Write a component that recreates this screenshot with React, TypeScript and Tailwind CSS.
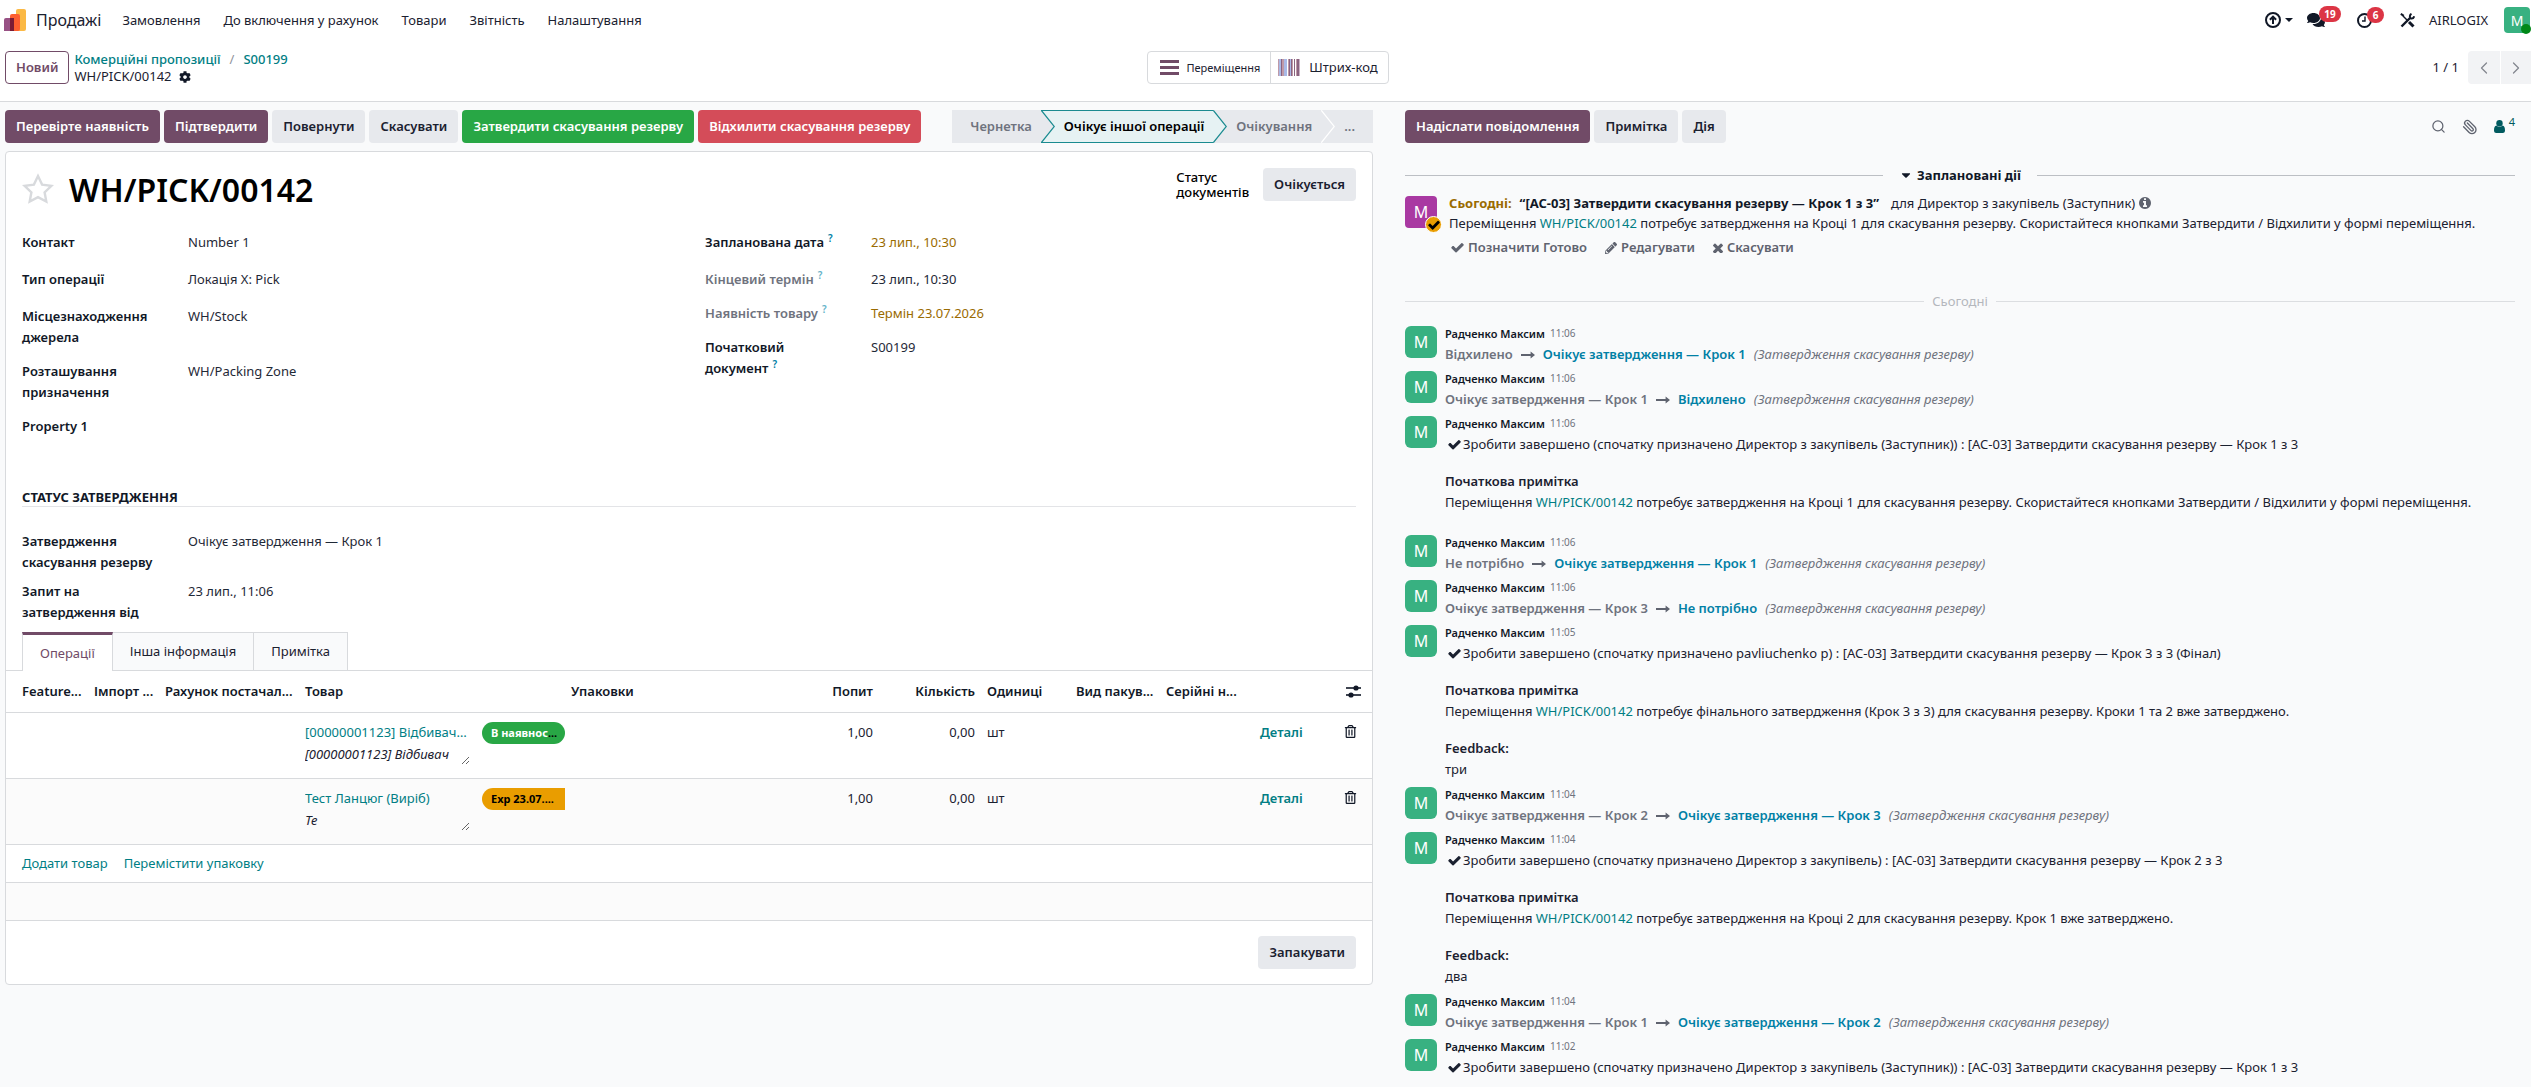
import type { ReactNode } from "react";
import clsx from "clsx";
import { FaCaretDown, FaCog, FaComments, FaPencilAlt, FaRegTrashAlt } from "react-icons/fa";
import { Search, Paperclip, ChevronLeft, ChevronRight } from "lucide-react";

const menuItems = ["Замовлення", "До включення у рахунок", "Товари", "Звітність", "Налаштування"];

type Field = { label: string; value?: string; help?: boolean; muted?: boolean; warning?: boolean; tall?: boolean };

const leftFields: Field[] = [
  { label: "Контакт", value: "Number 1", tall: true },
  { label: "Тип операції", value: "Локація X: Pick", tall: true },
  { label: "Місцезнаходження джерела", value: "WH/Stock" },
  { label: "Розташування призначення", value: "WH/Packing Zone" },
  { label: "Property 1" },
];

const rightFields: Field[] = [
  { label: "Запланована дата", value: "23 лип., 10:30", help: true, warning: true, tall: true },
  { label: "Кінцевий термін", value: "23 лип., 10:30", help: true, muted: true },
  { label: "Наявність товару", value: "Термін 23.07.2026", help: true, muted: true, warning: true },
  { label: "Початковий документ", value: "S00199", help: true },
];

const lines = [
  { product: "[00000001123] Відбивач ...", description: "[00000001123] Відбивач", badge: "В наявнос", ok: true },
  { product: "Тест Ланцюг (Виріб)", description: "Те", badge: "Exp 23.07.", ok: false },
];

type Message = {
  time: string;
  from?: string;
  to?: string;
  done?: string;
  note?: [string, string];
  feedback?: string;
};

const messages: Message[] = [
  { time: "11:06", from: "Відхилено", to: "Очікує затвердження — Крок 1" },
  { time: "11:06", from: "Очікує затвердження — Крок 1", to: "Відхилено" },
  {
    time: "11:06",
    done: "Зробити завершено (спочатку призначено Директор з закупівель (Заступник)) : [AC-03] Затвердити скасування резерву — Крок 1 з 3",
    note: [
      "Переміщення",
      "потребує затвердження на Кроці 1 для скасування резерву. Скористайтеся кнопками Затвердити / Відхилити у формі переміщення.",
    ],
  },
  { time: "11:06", from: "Не потрібно", to: "Очікує затвердження — Крок 1" },
  { time: "11:06", from: "Очікує затвердження — Крок 3", to: "Не потрібно" },
  {
    time: "11:05",
    done: "Зробити завершено (спочатку призначено pavliuchenko p) : [AC-03] Затвердити скасування резерву — Крок 3 з 3 (Фінал)",
    note: ["Переміщення", "потребує фінального затвердження (Крок 3 з 3) для скасування резерву. Кроки 1 та 2 вже затверджено."],
    feedback: "три",
  },
  { time: "11:04", from: "Очікує затвердження — Крок 2", to: "Очікує затвердження — Крок 3" },
  {
    time: "11:04",
    done: "Зробити завершено (спочатку призначено Директор з закупівель) : [AC-03] Затвердити скасування резерву — Крок 2 з 3",
    note: ["Переміщення", "потребує затвердження на Кроці 2 для скасування резерву. Крок 1 вже затверджено."],
    feedback: "два",
  },
  { time: "11:04", from: "Очікує затвердження — Крок 1", to: "Очікує затвердження — Крок 2" },
  {
    time: "11:02",
    done: "Зробити завершено (спочатку призначено Директор з закупівель (Заступник)) : [AC-03] Затвердити скасування резерву — Крок 1 з 3",
  },
];

function Button({ variant = "secondary", children }: { variant?: "primary" | "secondary" | "success" | "danger"; children: ReactNode }) {
  return (
    <button
      type="button"
      className={clsx(
        "h-[33px] shrink-0 whitespace-nowrap rounded px-[11px] font-semibold",
        variant === "primary" && "bg-[#714b67] text-white",
        variant === "secondary" && "bg-[#e7e9ed] text-[#1b2130]",
        variant === "success" && "bg-[#28a745] text-white",
        variant === "danger" && "bg-[#d44c59] text-white",
      )}
    >
      {children}
    </button>
  );
}

function SalesLogo() {
  return (
    <svg width="22" height="22" viewBox="0 0 22 22" aria-hidden="true">
      <rect x="12" y="0" width="10" height="22" rx="2" fill="#fbb945" />
      <path d="M0 11a2 2 0 0 1 2-2h8v13H0z" fill="#985184" />
      <path d="M6 7a2 2 0 0 1 2-2h6a2 2 0 0 1 2 2v13a2 2 0 0 1-2 2H6z" fill="#fc5e2f" />
      <path d="M6 9h4v13H6z" fill="#7a1b35" />
    </svg>
  );
}

function ToolsIcon() {
  return (
    <svg width="15" height="15" viewBox="0 0 15 15" fill="none" stroke="#111827" aria-hidden="true">
      <path d="M.8.8l3 2" strokeWidth="2" />
      <path d="M3 3l5 5" strokeWidth="1.4" />
      <path d="M9 9l4.500 4.500" strokeWidth="3" />
      <path d="M10 5L1.500 13.500" strokeWidth="2.400" />
      <path d="M14.200 3.200a3 3 0 0 1-3.600 2.200 3 3 0 0 1 .9-4.600" strokeWidth="2" />
    </svg>
  );
}

function Bars() {
  return (
    <svg width="19" height="15" viewBox="0 0 19 15" fill="#714b67" aria-hidden="true">
      <rect width="19" height="3" y="0" />
      <rect width="19" height="3" y="6" />
      <rect width="19" height="3" y="12" />
    </svg>
  );
}

function Barcode() {
  return (
    <svg width="22" height="17" viewBox="0 0 22 17" aria-hidden="true">
      <path d="M0 0h1v17H0zM4 0h2v17H4zM10 0h1v17h-1zM14 0h1v17h-1zM18 0h1v17h-1z" fill="#c09aa8" />
      <path d="M1 0h2v17H1zM6 0h2v17H6zM8 0h1v17H8zM12 0h1v17h-1z" fill="#a9b9e6" />
      <path d="M3 0h1v17H3zM11 0h1v17h-1zM13 0h1v17h-1zM16 0h1v17h-1zM19 0h2v17h-2z" fill="#8a6480" />
      <path d="M21 0h1v17h-1z" fill="#c9b2c4" />
    </svg>
  );
}

function LongArrow() {
  return (
    <svg width="14" height="8" viewBox="0 0 14 8" fill="#5f636f" className="inline-block shrink-0" aria-hidden="true">
      <path d="M0 3.1h9.600V.6L14 4 9.600 7.400V4.900H0z" />
    </svg>
  );
}

function CheckIcon({ size = 13 }: { size?: number }) {
  return (
    <svg width={size} height={size} viewBox="90 90 1612 1612" fill="currentColor" className="shrink-0" aria-hidden="true">
      <path d="M1671 566q0 40-28 68l-724 724-136 136q-28 28-68 28t-68-28l-136-136-362-362q-28-28-28-68t28-68l136-136q28-28 68-28t68 28l294 295 656-657q28-28 68-28t68 28l136 136q28 28 28 68z" />
    </svg>
  );
}

function InfoIcon() {
  return (
    <svg width="12" height="12" viewBox="128 128 1536 1536" fill="#5f636f" aria-hidden="true">
      <path d="M1152 1376v-160q0-14-9-23t-23-9h-96v-512q0-14-9-23t-23-9h-320q-14 0-23 9t-9 23v160q0 14 9 23t23 9h96v320h-96q-14 0-23 9t-9 23v160q0 14 9 23t23 9h448q14 0 23-9t9-23zm-128-896v-160q0-14-9-23t-23-9h-192q-14 0-23 9t-9 23v160q0 14 9 23t23 9h192q14 0 23-9t9-23zm640 416q0 209-103 385.5t-279.5 279.5-385.5 103-385.5-103-279.5-279.5-103-385.5 103-385.5 279.5-279.5 385.5-103 385.5 103 279.5 279.5 103 385.5z" />
    </svg>
  );
}

function TimesIcon() {
  return (
    <svg width="10" height="10" viewBox="302 302 1188 1188" fill="currentColor" aria-hidden="true">
      <path d="M1490 1322q0 40-28 68l-136 136q-28 28-68 28t-68-28l-294-294-294 294q-28 28-68 28t-68-28l-136-136q-28-28-28-68t28-68l294-294-294-294q-28-28-28-68t28-68l136-136q28-28 68-28t68 28l294 294 294-294q28-28 68-28t68 28l136 136q28 28 28 68t-28 68l-294 294 294 294q28 28 28 68z" />
    </svg>
  );
}

function SlidersIcon() {
  return (
    <svg width="15" height="13" viewBox="0 0 15 13" fill="#111827" aria-hidden="true">
      <rect x="0" y="2.200" width="15" height="1.600" />
      <rect x="0" y="9.200" width="15" height="1.600" />
      <circle cx="10" cy="3" r="2.600" />
      <circle cx="5" cy="10" r="2.600" />
    </svg>
  );
}

function Navbar() {
  return (
    <header className="flex h-10 items-center justify-between pl-1 pr-px text-[#1b2130]">
      <div className="flex items-center">
        <SalesLogo />
        <a href="#sales" className="ml-[10px] text-[16px] leading-6">
          Продажі
        </a>
        <nav className="ml-[21px] flex gap-[23px]">
          {menuItems.map((item) => (
            <a key={item} href="#menu">
              {item}
            </a>
          ))}
        </nav>
      </div>
      <div className="flex items-center">
        <button type="button" aria-label="Оновлення" className="flex items-center gap-1">
          <svg width="16" height="16" viewBox="0 0 16 16" fill="none" stroke="#111827" strokeWidth="2" aria-hidden="true">
            <circle cx="8" cy="8" r="7" />
            <path d="M8 12V5M4.900 7.800L8 4.700l3.100 3.100" />
          </svg>
          <svg width="8" height="4" viewBox="0 0 8 4" fill="#111827" aria-hidden="true">
            <path d="M0 0h8L4 4z" />
          </svg>
        </button>
        <button type="button" aria-label="Повідомлення" className="relative ml-[14px] w-[34px]">
          <FaComments size={18} color="#111827" />
          <span className="absolute -top-[5px] left-[12px] flex h-4 w-[22px] items-center justify-center rounded-full bg-[#dc3545] text-[10px] font-bold leading-none text-white">
            19
          </span>
        </button>
        <button type="button" aria-label="Дії" className="relative ml-4 w-[27px]">
          <svg width="15" height="15" viewBox="0 0 15 15" fill="none" stroke="#111827" strokeWidth="2" aria-hidden="true">
            <circle cx="7.5" cy="7.5" r="6.5" />
            <path d="M8 3.500v4.500H5" strokeWidth="1.4" />
          </svg>
          <span className="absolute -top-[6px] left-[10px] flex h-4 w-[17px] items-center justify-center rounded-full bg-[#dc3545] text-[10px] font-bold leading-none text-white">
            6
          </span>
        </button>
        <button type="button" aria-label="Інструменти" className="ml-4">
          <ToolsIcon />
        </button>
        <span className="ml-[14px]">AIRLOGIX</span>
        <button type="button" aria-label="Профіль" className="relative ml-4 flex h-[26px] w-[26px] items-center justify-center rounded bg-[#38b181] text-[14px] text-white">
          M
          <span className="absolute -bottom-px -right-px h-[10px] w-[10px] rounded-full bg-[#008818]" />
        </button>
      </div>
    </header>
  );
}

function ControlPanel() {
  return (
    <div className="flex h-[62px] items-start justify-between border-b border-[#d8dadd] pt-[11px]">
      <div className="flex flex-1 gap-[5px] pl-[5px]">
        <button type="button" className="h-[33px] rounded border border-[#714b67] px-[10px] font-semibold text-[#714b67]">
          Новий
        </button>
        <div className="flex flex-col leading-[17px]">
          <div className="flex gap-[9px] font-medium text-[#017e84]">
            <a href="#quotations">Комерційні пропозиції</a>
            <span className="font-normal text-[#8f929b]">/</span>
            <a href="#order">S00199</a>
          </div>
          <div className="flex items-center gap-[7px]">
            WH/PICK/00142
            <FaCog size={12} color="#111827" />
          </div>
        </div>
      </div>
      <div className="flex h-[33px] divide-x divide-[#d8dadd] rounded border border-[#d8dadd]">
        <button type="button" className="flex items-center gap-[7px] pl-3 pr-[10px] text-[11px]">
          <Bars />
          Переміщення
        </button>
        <button type="button" className="flex items-center gap-[9px] pl-[7px] pr-[10px]">
          <Barcode />
          Штрих-код
        </button>
      </div>
      <div className="flex flex-1 items-center justify-end">
        <span className="mr-[9px]">1 / 1</span>
        <button type="button" aria-label="Попередній" disabled className="flex h-[33px] w-8 items-center justify-center rounded-l bg-[#f2f3f5] text-[#83868f]">
          <ChevronLeft size={20} strokeWidth={1.5} />
        </button>
        <button type="button" aria-label="Наступний" disabled className="ml-px flex h-[33px] w-[30px] items-center justify-center bg-[#f2f3f5] text-[#83868f]">
          <ChevronRight size={20} strokeWidth={1.5} />
        </button>
      </div>
    </div>
  );
}

function StatusArrow({ left, right, stroke }: { left: string; right: string; stroke: string }) {
  return (
    <svg width="14" height="33" viewBox="0 0 14 33" className="shrink-0" aria-hidden="true">
      <rect width="14" height="33" fill={right} />
      <path d="M0 0L13.300 16.500 0 33z" fill={left} />
      {right === "#e6f2f3" && <path d="M0 .5h14M0 32.500h14" stroke={stroke} />}
      <path d="M.3.3L13.300 16.500.3 32.700" fill="none" stroke={stroke} strokeWidth="1.200" />
    </svg>
  );
}

function StatusBar() {
  return (
    <div className="flex h-[33px] items-stretch font-semibold text-[#6f737e]">
      <button type="button" className="bg-[#e7e9ed] pl-[18px] pr-[9px]">
        Чернетка
      </button>
      <StatusArrow left="#e7e9ed" right="#e6f2f3" stroke="#1a8b90" />
      <button type="button" className="border-y border-[#1a8b90] bg-[#e6f2f3] px-[9px] text-black">
        Очікує іншої операції
      </button>
      <StatusArrow left="#e6f2f3" right="#e7e9ed" stroke="#1a8b90" />
      <button type="button" className="bg-[#e7e9ed] px-[9px]">
        Очікування
      </button>
      <StatusArrow left="#e7e9ed" right="#e7e9ed" stroke="#ffffff" />
      <button type="button" className="bg-[#e7e9ed] pl-[9px] pr-[18px]">
        ...
      </button>
    </div>
  );
}

function FieldRow({ field }: { field: Field }) {
  return (
    <div className={clsx("flex leading-[21px]", field.tall && "min-h-6")}>
      <span className={clsx("w-[166px] shrink-0 pr-7 font-semibold", field.muted ? "text-[#6f737e]" : "text-[#111827]")}>
        {field.label}
        {field.help && (
          <sup className={clsx("ml-1 text-[10px]", field.muted ? "text-[#66b3c9]" : "text-[#0180a5]")}>?</sup>
        )}
      </span>
      <span className={field.warning ? "text-[#9a6b01]" : "text-[#1f2937]"}>{field.value}</span>
    </div>
  );
}

function OperationsTable() {
  const head = "overflow-hidden whitespace-nowrap px-[6px] text-left font-semibold text-[#111827]";
  return (
    <table className="w-full table-fixed border-collapse">
      <colgroup>
        <col className="w-[82px]" />
        <col className="w-[71px]" />
        <col className="w-[140px]" />
        <col className="w-[177px]" />
        <col className="w-[89px]" />
        <col />
        <col className="w-[100px]" />
        <col className="w-[102px]" />
        <col className="w-[89px]" />
        <col className="w-[90px]" />
        <col className="w-[94px]" />
        <col className="w-[78px]" />
        <col className="w-[40px]" />
      </colgroup>
      <thead>
        <tr className="h-[41px] border-b border-[#d8dadd]">
          <th className={clsx(head, "pl-4")}>Feature...</th>
          <th className={head}>Імпорт ...</th>
          <th className={head}>Рахунок постачал...</th>
          <th className={head}>Товар</th>
          <th className={head} />
          <th className={head}>Упаковки</th>
          <th className={clsx(head, "text-right")}>Попит</th>
          <th className={clsx(head, "text-right")}>Кількість</th>
          <th className={head}>Одиниці</th>
          <th className={head}>Вид пакув...</th>
          <th className={head}>Серійні н...</th>
          <th className={head} />
          <th className={head}>
            <button type="button" aria-label="Стовпці" className="ml-2 block">
              <SlidersIcon />
            </button>
          </th>
        </tr>
      </thead>
      <tbody>
        {lines.map((line) => (
          <tr key={line.product} className="h-[66px] border-b border-[#d8dadd] align-top even:bg-[#fbfbfb]">
            <td colSpan={3} />
            <td className="px-[6px] pt-[9px] leading-[21px]">
              <a href="#product" className="block truncate text-[#017e84]">
                {line.product}
              </a>
              <textarea
                aria-label="Опис"
                defaultValue={line.description}
                rows={1}
                className="block h-[22px] w-full overflow-hidden bg-transparent pr-4 italic leading-[22px] text-[#1b2130] outline-none"
              />
            </td>
            <td className="pl-[6px] pt-[9px]">
              <span
                className={clsx(
                  "block h-[22px] overflow-hidden whitespace-nowrap pl-[9px] text-[11px] font-bold leading-[22px]",
                  line.ok ? "rounded-full bg-[#28a745] text-white" : "rounded-l-full bg-[#e99d00] text-black",
                )}
              >
                {line.badge}
                <span className="text-black">...</span>
              </span>
            </td>
            <td />
            <td className="px-[6px] pt-[9px] text-right leading-[21px]">1,00</td>
            <td className="px-[6px] pt-[9px] text-right leading-[21px]">0,00</td>
            <td className="px-[6px] pt-[9px] leading-[21px]">шт</td>
            <td colSpan={2} />
            <td className="px-[6px] pt-[9px] leading-[21px]">
              <button type="button" className="font-semibold text-[#017e84]">
                Деталі
              </button>
            </td>
            <td className="px-[6px] pt-[12px]">
              <button type="button" aria-label="Видалити" className="ml-[6px] block">
                <FaRegTrashAlt size={13} color="#111827" />
              </button>
            </td>
          </tr>
        ))}
        <tr className="h-[38px] border-b border-[#d8dadd]">
          <td colSpan={13} className="pl-4">
            <a href="#add" className="mr-4 text-[#017e84]">
              Додати товар
            </a>
            <a href="#move" className="text-[#017e84]">
              Перемістити упаковку
            </a>
          </td>
        </tr>
        <tr className="h-[38px] border-b border-[#d8dadd] bg-[#fbfbfb]">
          <td colSpan={13} />
        </tr>
      </tbody>
    </table>
  );
}

function Sheet() {
  return (
    <section className="mt-2 rounded border border-[#d8dadd] bg-white">
      <div className="flex items-start px-4 pt-4">
        <button type="button" aria-label="Обране" className="mt-[5px]">
          <svg width="32" height="31" viewBox="0 0 32 31" fill="none" stroke="#d8dadd" strokeWidth="2.400" aria-hidden="true">
            <path d="M16 3l4.100 8.600 9.300 1.200-6.800 6.500 1.700 9.300L16 24.100l-8.300 4.500 1.700-9.300L2.600 12.800l9.300-1.200z" />
          </svg>
        </button>
        <h1 className="ml-[15px] text-[32px] font-semibold leading-[44px] text-black">WH/PICK/00142</h1>
        <div className="ml-auto flex items-start gap-[14px]">
          <div className="pt-[2px] font-medium leading-[15px] text-black">
            Статус
            <br />
            документів
          </div>
          <Button>Очікується</Button>
        </div>
      </div>

      <div className="mt-5 grid grid-cols-2 px-4">
        <div className="flex flex-col gap-[13px]">
          {leftFields.map((field) => (
            <FieldRow key={field.label} field={field} />
          ))}
        </div>
        <div className="flex flex-col gap-[13px] pl-4">
          {rightFields.map((field) => (
            <FieldRow key={field.label} field={field} />
          ))}
        </div>
      </div>

      <h2 className="mx-4 mt-[51px] border-b border-[#e3e4e7] font-bold uppercase leading-[18px] text-[#111827]">
        Статус затвердження
      </h2>
      <div className="mt-6 flex flex-col gap-2 px-4">
        <FieldRow field={{ label: "Затвердження скасування резерву", value: "Очікує затвердження — Крок 1" }} />
        <FieldRow field={{ label: "Запит на затвердження від", value: "23 лип., 11:06" }} />
      </div>

      <div className="mt-[9px] flex h-[39px] border-b border-[#d8dadd] pl-4">
        <button type="button" className="-mb-px h-[39px] border-x border-t-[3px] border-[#d8dadd] border-t-[#714b67] bg-white px-[17px] text-[#714b67]">
          Операції
        </button>
        <button type="button" className="border-r border-t border-[#d8dadd] bg-[#f9fafb] px-[17px]">
          Інша інформація
        </button>
        <button type="button" className="border-r border-t border-[#d8dadd] bg-[#f9fafb] px-[17px]">
          Примітка
        </button>
      </div>
      <OperationsTable />
      <div className="flex justify-end px-4 py-[15px]">
        <Button>Запакувати</Button>
      </div>
    </section>
  );
}

function PickLink() {
  return (
    <a href="#picking" className="text-[#017e84]">
      WH/PICK/00142
    </a>
  );
}

function MessageItem({ message }: { message: Message }) {
  return (
    <article className="flex gap-2 pb-[6px] last:pb-0">
      <div className="flex h-8 w-8 shrink-0 items-center justify-center rounded-md bg-[#38b181] text-[16px] text-white">M</div>
      <div className="-mt-px min-w-0 flex-1">
        <div className="flex items-center gap-[5px] leading-[17px]">
          <span className="text-[11px] font-semibold text-[#111827]">Радченко Максим</span>
          <time className="text-[10px] text-[#6f737e]">{message.time}</time>
        </div>
        {message.from && (
          <div className="mt-[2px] flex items-center leading-[21px]">
            <span className="font-semibold text-[#6f737e]">{message.from}</span>
            <span className="mx-2 flex">
              <LongArrow />
            </span>
            <span className="font-semibold text-[#0180a5]">{message.to}</span>
            <span className="ml-2 italic text-[#6f737e]">(Затвердження скасування резерву)</span>
          </div>
        )}
        {message.done && (
          <div className="mt-[2px] flex items-center gap-[2px] pl-[3px] leading-[21px]">
            <CheckIcon />
            {message.done}
          </div>
        )}
        {message.note && (
          <div className="mt-4 leading-[21px]">
            <div className="font-semibold">Початкова примітка</div>
            <p>
              {message.note[0]} <PickLink /> {message.note[1]}
            </p>
          </div>
        )}
        {message.feedback ? (
          <div className="mt-4 pb-px leading-[21px]">
            <div className="font-semibold">Feedback:</div>
            <p>{message.feedback}</p>
          </div>
        ) : (
          message.note && <div className="h-4" />
        )}
      </div>
    </article>
  );
}

function Chatter() {
  return (
    <aside className="min-w-0 pl-8 pr-4 pt-2">
      <div className="flex items-center gap-1">
        <Button variant="primary">Надіслати повідомлення</Button>
        <Button>Примітка</Button>
        <Button>Дія</Button>
        <div className="ml-auto flex items-center gap-4 text-[#5f636f]">
          <button type="button" aria-label="Пошук">
            <Search size={15} strokeWidth={2} />
          </button>
          <button type="button" aria-label="Вкладення">
            <Paperclip size={16} strokeWidth={2} className="-scale-x-100" />
          </button>
          <button type="button" aria-label="Підписники" className="flex items-center gap-1 text-[#015a5f]">
            <svg width="11" height="13" viewBox="0 0 11 13" fill="currentColor" aria-hidden="true">
              <circle cx="5.5" cy="3.2" r="3.200" />
              <path d="M2.500 5.500a4 4 0 0 0 6 0C10.300 5.900 11 7.700 11 10.500 11 12.200 10 13 8.800 13H2.200C1 13 0 12.200 0 10.500 0 7.700.7 5.900 2.500 5.500z" />
            </svg>
            <sup className="text-[11px] leading-none">4</sup>
          </button>
        </div>
      </div>

      <div className="mt-[22px] flex items-center gap-4 leading-[20px]">
        <div className="h-px flex-1 bg-[#bcbfc4]" />
        <button type="button" className="flex items-center gap-1 font-bold text-[#111827]">
          <FaCaretDown size={14} />
          Заплановані дії
        </button>
        <div className="h-px flex-1 bg-[#bcbfc4]" />
      </div>

      <div className="mt-2 flex gap-3">
        <div className="relative mt-[3px] flex h-8 w-8 shrink-0 items-center justify-center rounded bg-[#a939a2] text-[16px] text-white">
          M
          <span className="absolute -bottom-[5px] -right-[5px] flex h-[17px] w-[17px] items-center justify-center rounded-full border border-white bg-[#e99d00] text-black">
            <CheckIcon size={12} />
          </span>
        </div>
        <div className="min-w-0">
          <div className="flex items-center leading-5">
            <span className="font-bold text-[#9a6b01]">Сьогодні:</span>
            <span className="ml-2 font-bold text-[#111827]">“[AC-03] Затвердити скасування резерву — Крок 1 з 3”</span>
            <span className="ml-3 mr-1">для Директор з закупівель (Заступник)</span>
            <InfoIcon />
          </div>
          <p className="leading-5">
            Переміщення <PickLink /> потребує затвердження на Кроці 1 для скасування резерву. Скористайтеся кнопками Затвердити /
            Відхилити у формі переміщення.
          </p>
          <div className="mt-1 flex gap-[18px] pl-[2px] font-semibold leading-[21px] text-[#5f636f]">
            <button type="button" className="flex items-center gap-1">
              <CheckIcon />
              Позначити Готово
            </button>
            <button type="button" className="flex items-center gap-1">
              <FaPencilAlt size={12} />
              Редагувати
            </button>
            <button type="button" className="flex items-center gap-1">
              <TimesIcon />
              Скасувати
            </button>
          </div>
        </div>
      </div>

      <div className="mt-[33px] flex items-center gap-2 leading-[20px]">
        <div className="h-px flex-1 bg-[#dcdee1]" />
        <span className="text-[#b4b7bd]">Сьогодні</span>
        <div className="h-px flex-1 bg-[#dcdee1]" />
      </div>

      <div className="mt-[15px]">
        {messages.map((message, index) => (
          <MessageItem key={index} message={message} />
        ))}
      </div>
    </aside>
  );
}

export default function App() {
  return (
    <div className="min-h-screen bg-[#f9fafb] font-['Noto_Sans','Open_Sans',sans-serif] text-[13px] leading-[21px] text-[#1b2130]">
      <div className="bg-white">
        <Navbar />
        <ControlPanel />
      </div>
      <main className="grid grid-cols-[1373fr_1158fr]">
        <div className="min-w-0 pl-[5px] pt-2">
          <div className="flex gap-1">
            <Button variant="primary">Перевірте наявність</Button>
            <Button variant="primary">Підтвердити</Button>
            <Button>Повернути</Button>
            <Button>Скасувати</Button>
            <Button variant="success">Затвердити скасування резерву</Button>
            <Button variant="danger">Відхилити скасування резерву</Button>
            <div className="ml-auto">
              <StatusBar />
            </div>
          </div>
          <Sheet />
        </div>
        <Chatter />
      </main>
    </div>
  );
}
